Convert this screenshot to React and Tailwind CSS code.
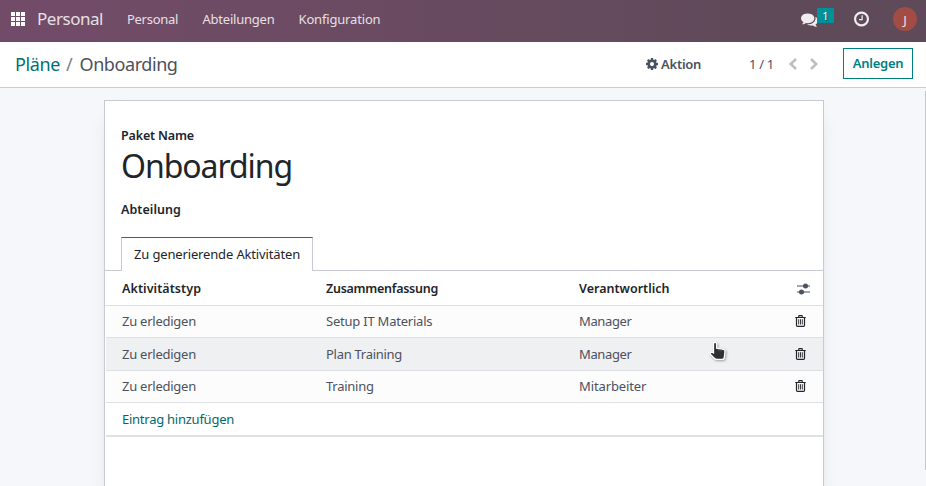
const COMMENTS =
  "M1408 768q0 139-94 257t-256.500 186.500-353.500 68.500q-86 0-176-16-124 88-278 128-36 9-86 16h-3q-11 0-20.500-8t-11.500-21q-1-3-1-6.500t.5-6.500 2-6l2.500-5 3.500-5.500 4-5 4.500-5 4-4.500q5-6 23-25t26-29.500 22.500-29 25-38.500 20.500-44q-124-72-195-177t-71-224q0-139 94-257t256.500-186.500 353.500-68.500 353.500 68.500 256.500 186.500 94 257zm384 256q0 120-71 224.500t-195 176.500q10 24 20.500 44t25 38.500 22.500 29 26 29.500 23 25q1 1 4 4.500t4.500 5 4 5 3.500 5.500l2.500 5 2 6 .5 6.500-1 6.500q-3 14-13 22t-22 7q-50-7-86-16-154-40-278-128-90 16-176 16-271 0-472-132 58 4 88 4 161 0 309-45t264-129q125-92 192-212t67-254q0-77-23-152 129 71 204 178t75 230z";
const CLOCK =
  "M896 544v448q0 14-9 23t-23 9h-320q-14 0-23-9t-9-23v-64q0-14 9-23t23-9h224v-352q0-14 9-23t23-9h64q14 0 23 9t9 23zm416 352q0-148-73-273t-198-198-273-73-273 73-198 198-73 273 73 273 198 198 273 73 273-73 198-198 73-273zm224 0q0 209-103 385.500t-279.500 279.500-385.500 103-385.500-103-279.500-279.500-103-385.500 103-385.500 279.500-279.500 385.500-103 385.500 103 279.500 279.500 103 385.500z";
const COG =
  "M1024 896q0-106-75-181t-181-75-181 75-75 181 75 181 181 75 181-75 75-181zm512-109v222q0 12-8 23t-20 13l-185 28q-19 54-39 91 35 50 107 138 10 12 10 25t-9 23q-27 37-99 108t-94 71q-12 0-26-9l-138-108q-44 23-91 38-16 136-29 186-7 28-36 28h-222q-14 0-24.500-8.500t-11.500-21.500l-28-184q-49-16-90-37l-141 107q-10 9-25 9-14 0-25-11-126-114-165-168-7-10-7-23 0-12 8-23 15-21 51-66.500t54-70.500q-27-50-41-99l-183-27q-13-2-21-12.500t-8-23.500v-222q0-12 8-23t19-13l186-28q14-46 39-92-40-57-107-138-10-12-10-24 0-10 9-23 26-36 98.500-107.500t94.500-71.500q13 0 26 10l138 107q44-23 91-38 16-136 29-186 7-28 36-28h222q14 0 24.500 8.500t11.500 21.500l28 184q49 16 90 37l142-107q9-9 24-9 13 0 25 10 129 119 165 170 7 8 7 22 0 12-8 23-15 21-51 66.500t-54 70.500q26 50 41 98l183 28q13 2 21 12.500t8 23.500z";

const rows = [
  { type: "Zu erledigen", summary: "Setup IT Materials", summaryClass: "tracking-[-0.22px]", owner: "Manager", ownerClass: "tracking-[-0.36px]", rowClass: "h-8 pb-px bg-[#fcfcfc]" },
  { type: "Zu erledigen", summary: "Plan Training", summaryClass: "tracking-[-0.28px]", owner: "Manager", ownerClass: "tracking-[-0.36px]", rowClass: "h-[33px] bg-[#eff0f2]" },
  { type: "Zu erledigen", summary: "Training", summaryClass: "tracking-[-0.25px]", owner: "Mitarbeiter", ownerClass: "tracking-[-0.12px]", rowClass: "h-8 pb-px bg-[#fcfcfc]" },
];

function Trash() {
  return (
    <svg className="h-3 w-[11px]" viewBox="0 0 11 12" fill="none" stroke="#212529">
      <path d="M.3 2.500H10.700M3.500 2.300L4 .6H7L7.500 2.300" strokeWidth="1.100" />
      <path d="M1.500 2.500V10.200Q1.500 11.400 2.500 11.400H8.500Q9.500 11.400 9.500 10.200V2.500" strokeWidth="1.200" />
      <path d="M3.700 4.200V9.500M5.500 4.200V9.500M7.300 4.200V9.500" strokeWidth=".9" />
    </svg>
  );
}

function Navbar() {
  return (
    <header className="flex h-[42px] items-center bg-linear-to-r from-[#714b67] from-10% to-[#5f4a59] to-85% text-[#e6e0e4]">
      <svg className="mt-[-4px] ml-[11px] h-3.5 w-3.5" viewBox="0 0 14 14" fill="#fff">
        {[0, 5, 10].map((y) => [0, 5, 10].map((x) => <rect key={`${x}-${y}`} x={x} y={y} width="4" height="4" />))}
      </svg>
      <span className="mt-[-4px] ml-3 w-[90px] text-[17px] tracking-[-0.47px]">Personal</span>
      <nav className="mt-[-5px] flex">
        <span className="w-[75.5px] tracking-[-0.29px]">Personal</span>
        <span className="w-24 tracking-[-0.22px]">Abteilungen</span>
        <span className="tracking-[-0.17px]">Konfiguration</span>
      </nav>
      <div className="ml-auto flex h-full items-center pr-[9px]">
        <svg className="mt-[-4px] mr-[-1px] h-[17px] w-[17px]" viewBox="0 0 1792 1792" fill="#f0edef"><path d={COMMENTS} /></svg>
        <span className="mt-[-11px] flex h-[15px] w-[17px] items-center justify-center bg-[#00909a] text-[11px] leading-none text-white [text-shadow:1px_1px_0_#0006]">1</span>
        <svg className="mt-[-4px] ml-5 h-[18px] w-[15px]" viewBox="0 0 1536 1792" fill="#f0edef"><path d={CLOCK} /></svg>
        <span className="mt-[-4px] ml-6 flex h-6 w-6 items-center justify-center rounded-full bg-[#a24c45] pt-px text-[13px] text-[#f0e4e3]">J</span>
      </div>
    </header>
  );
}

function ControlPanel() {
  return (
    <div className="flex h-[46px] items-center border-b border-[#c9ccd2] bg-white pr-[13px] pb-[2px] pl-[15px] text-[#4c5160]">
      <div className="flex text-[18px]">
        <span className="w-[51px] tracking-[-0.38px] text-[#017074]">Pläne</span>
        <span className="w-[13.500px] text-[#7b808a]">/</span>
        <span className="tracking-[-0.42px]">Onboarding</span>
      </div>
      <div className="ml-auto flex items-center">
        <svg className="h-[14px] w-3" viewBox="0 0 1536 1792" fill="#4c5160"><path d={COG} /></svg>
        <span className="ml-[3px] w-[88px] font-semibold tracking-[-0.25px]">Aktion</span>
        <span className="w-[39px] tracking-[-0.29px]">1 / 1</span>
        <svg className="h-3 w-[30px]" viewBox="0 0 30 12" fill="none" stroke="#bdbec1" strokeWidth="2.600">
          <path d="M8 1L2.800 6L8 11M23 1L28.200 6L23 11" />
        </svg>
        <button className="ml-[25px] h-[31px] w-[70px] border border-[#017e84] pb-px font-semibold tracking-[-0.26px] text-[#017e84]">Anlegen</button>
      </div>
    </div>
  );
}

function Cursor() {
  return (
    <svg className="absolute top-[341px] left-[709px] h-5 w-[17px] drop-shadow-[1px_1px_1px_#0005]" viewBox="0 0 17 20">
      <path d="M4.500 2Q6.500 .5 7.600 2.400V7.200L14.500 8.300Q16 8.700 16 10.500L15.300 16.300Q15 18.400 13 18.400H7.700Q6 18.400 5 17L1.300 13.300Q.8 11.300 3 11.200L4.500 11.900Z" fill="#303030" stroke="#fff" strokeWidth="1.300" />
      <path d="M9.900 8V10.200M12.200 8.300V10.500" stroke="#777" strokeWidth=".6" />
    </svg>
  );
}

const GRID = "grid grid-cols-[204px_253px_216px_1fr] items-center";

function ActivityTable() {
  return (
    <div>
      <div className={`${GRID} h-[35px] border-b border-[#dee0e4] pt-px pl-[17px] text-[12.5px] font-semibold text-[#212529]`}>
        <span className="tracking-[0.07px]">Aktivitätstyp</span>
        <span className="tracking-[-0.27px]">Zusammenfassung</span>
        <span className="tracking-[0.01px]">Verantwortlich</span>
        <svg className="ml-0.5 h-3 w-[13px]" viewBox="0 0 13 12" stroke="#4c5160" strokeWidth="1.200">
          <path d="M0 3H13M0 9H13" />
          <circle cx="8.500" cy="3" r="1.900" fill="#4c5160" />
          <circle cx="4.500" cy="9" r="1.900" fill="#4c5160" />
        </svg>
      </div>
      <div className="ml-px">
        {rows.map((row, index) => (
          <div key={index} className={`${GRID} ${row.rowClass} border-b border-[#dee0e4] pl-4 text-[#4c5160]`}>
            <span className="tracking-[-0.25px]">{row.type}</span>
            <span className={row.summaryClass}>{row.summary}</span>
            <span className={row.ownerClass}>{row.owner}</span>
            <Trash />
          </div>
        ))}
        <div className="flex h-[34px] items-center border-b-2 border-[#dee0e4] pl-4 tracking-[-0.25px] text-[#01696e]">
          Eintrag hinzufügen
        </div>
      </div>
    </div>
  );
}

export default function App() {
  return (
    <div className="relative h-[486px] w-[926px] overflow-hidden bg-[#f5f7fb] font-['Noto_Sans',sans-serif] text-[13px] leading-5">
      <Navbar />
      <ControlPanel />
      <div className="flex h-[398px] pt-3">
        <main className="ml-[104px] h-[400px] w-[720px] shrink-0 border border-[#c8cad3] bg-white shadow-[0_8px_20px_-10px_#0003]">
          <div className="pl-4 text-[#212529]">
            <div className="pt-[25px] text-[12.5px] font-semibold tracking-[-0.15px]">Paket Name</div>
            <h1 className="h-10 text-[32px] leading-10 tracking-[-1.07px]">Onboarding</h1>
            <div className="mt-3.5 h-[19px] text-[12.5px] font-semibold tracking-[0.06px]">Abteilung</div>
          </div>
          <div className="mt-[18px] flex h-[34px]">
            <div className="w-4 border-b border-[#c8cad3]" />
            <div className="w-48 border-x border-t border-x-[#c8cad3] border-t-[#714b67] pt-1.5 pl-3 tracking-[-0.15px] whitespace-nowrap text-[#212529]">
              Zu generierende Aktivitäten
            </div>
            <div className="flex-1 border-b border-[#c8cad3]" />
          </div>
          <ActivityTable />
        </main>
        <div className="mt-[-9px] ml-auto h-[379px] w-px bg-[#c4c5c9]" />
      </div>
      <Cursor />
    </div>
  );
}
